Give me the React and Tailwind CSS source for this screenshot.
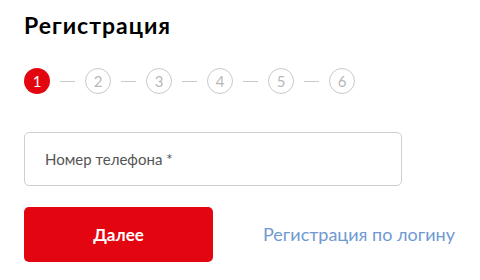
import React from "react";

function Step({ n, active }) {
  return active ? (
    <div className="w-[26px] h-[26px] rounded-full bg-[#e30611] flex items-center justify-center text-white text-[15px] leading-none">
      {n}
    </div>
  ) : (
    <div className="w-[26px] h-[26px] rounded-full border border-[#c9c9c9] flex items-center justify-center text-[#b8b8b8] text-[15px] leading-none">
      {n}
    </div>
  );
}

export default function App() {
  const steps = [1, 2, 3, 4, 5, 6];
  return (
    <div className="w-[480px] h-[280px] bg-white pl-6 pt-[11px] font-['Lato',sans-serif] overflow-hidden">
      <h1 className="text-[23px] font-bold leading-[28px] tracking-[1px] text-black">Регистрация</h1>
      <div className="flex items-center gap-[10px] mt-[29px]">
        {steps.map((n, i) => (
          <React.Fragment key={n}>
            {i > 0 && <div className="w-[15px] h-px bg-[#c9c9c9]" />}
            <Step n={n} active={n === 1} />
          </React.Fragment>
        ))}
      </div>
      <div className="mt-[38px] w-[378px] h-[54px] border border-[#cfcfcf] rounded-[5px] flex items-center pl-5 text-[15px] text-[#555]">
        Номер телефона *
      </div>
      <div className="mt-[21px] flex items-center gap-[50px]">
        <button className="w-[189px] h-[55px] rounded-[5px] bg-[#e30611] text-white text-[17px] font-bold">
          Далее
        </button>
        <span className="text-[18px] text-[#7099d2]">Регистрация по логину</span>
      </div>
    </div>
  );
}
